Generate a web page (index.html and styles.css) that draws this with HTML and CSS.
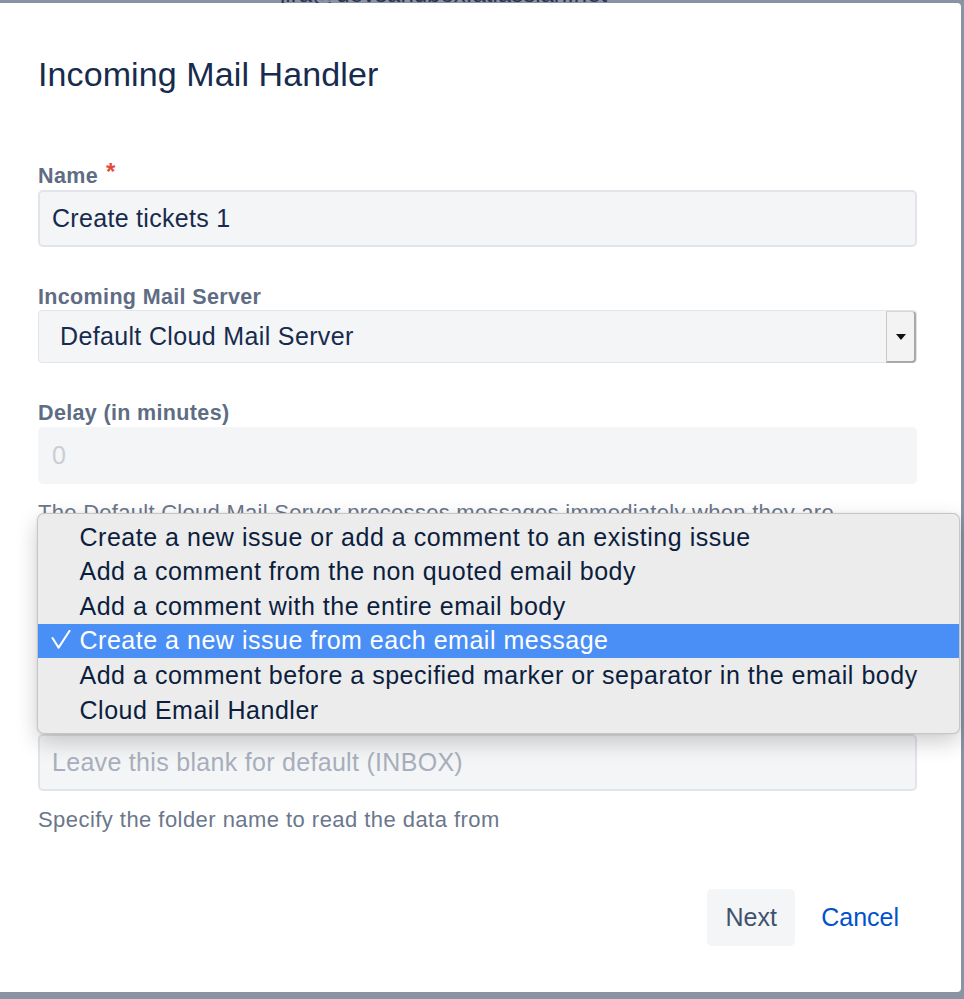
FILE: index.html
```html
<!DOCTYPE html>
<html lang="en">
<head>
<meta charset="utf-8">
<title>Incoming Mail Handler</title>
<link rel="stylesheet" href="styles.css">
</head>
<body>
<div class="page">
  <div class="page-email">jira@devsandbox.atlassian.net</div>
</div>

<div class="modal" role="dialog">
  <h1 class="title">Incoming Mail Handler</h1>

  <div class="field field-first">
    <div class="label">Name<span class="req">*</span></div>
    <div class="input">Create tickets 1</div>
  </div>

  <div class="field">
    <div class="label">Incoming Mail Server</div>
    <div class="select">
      <span class="select-text">Default Cloud Mail Server</span>
      <span class="select-btn"><span class="select-arrow"></span></span>
    </div>
  </div>

  <div class="field">
    <div class="label">Delay (in minutes)</div>
    <div class="input input-disabled">0</div>
    <div class="help help-delay">The Default Cloud Mail Server processes messages immediately when they are<br>received.</div>
  </div>

  <div class="field">
    <div class="label">Handler</div>
    <div class="select">
      <span class="select-text">Create a new issue from each email message</span>
      <span class="select-btn"><span class="select-arrow"></span></span>
    </div>
  </div>

  <div class="field field-folder">
    <div class="label">Folder name</div>
    <div class="input input-placeholder">Leave this blank for default (INBOX)</div>
    <div class="help">Specify the folder name to read the data from</div>
  </div>

  <div class="footer">
    <button class="btn btn-next" type="button">Next</button>
    <button class="btn btn-cancel" type="button">Cancel</button>
  </div>

  <ul class="menu">
    <li class="menu-item">Create a new issue or add a comment to an existing issue</li>
    <li class="menu-item">Add a comment from the non quoted email body</li>
    <li class="menu-item">Add a comment with the entire email body</li>
    <li class="menu-item menu-item-selected"><svg class="check" width="20" height="20" viewBox="0 0 20 20"><polyline points="1.5,8 7.6,17.6 18.6,0.8" fill="none" stroke="#ffffff" stroke-width="2" stroke-linecap="round" stroke-linejoin="round"/></svg>Create a new issue from each email message</li>
    <li class="menu-item">Add a comment before a specified marker or separator in the email body</li>
    <li class="menu-item">Cloud Email Handler</li>
  </ul>
</div>
</body>
</html>
```

FILE: styles.css
```css
html, body {
  margin: 0;
  padding: 0;
}

body {
  position: relative;
  width: 964px;
  height: 999px;
  overflow: hidden;
  background: #8993a4;
  font-family: "Liberation Sans", Arial, sans-serif;
}

.page {
  padding-left: 280px;
}

.page-email {
  margin-top: -20px;
  font-size: 24px;
  line-height: 28px;
  color: #2a3550;
}

.modal {
  position: absolute;
  top: 3px;
  left: 0;
  width: 961px;
  box-sizing: border-box;
  padding: 51px 44px 46px 38px;
  background: #ffffff;
  border-radius: 0 4px 4px 0;
}

.title {
  margin: 0;
  font-size: 34px;
  font-weight: 400;
  line-height: 40px;
  letter-spacing: 0.1px;
  color: #172b4d;
}

.field {
  margin-top: 37px;
}

.field-first {
  margin-top: 69px;
}

.field-folder {
  margin-top: 39px;
}

.label {
  font-size: 21.5px;
  font-weight: 700;
  line-height: 26px;
  letter-spacing: 0.35px;
  color: #5e6c84;
}

.req {
  display: inline-block;
  vertical-align: top;
  margin-left: 8px;
  font-size: 24px;
  line-height: 18px;
  font-weight: 700;
  color: #e5493a;
}

.input {
  box-sizing: border-box;
  height: 57px;
  margin-top: 1px;
  padding: 0 12px;
  display: flex;
  align-items: center;
  border: 2px solid #e2e4e9;
  border-radius: 5px;
  background: #f4f5f7;
  font-size: 25px;
  letter-spacing: 0.3px;
  color: #172b4d;
}

.input-disabled {
  border-color: #f4f5f7;
  color: #c9ced6;
}

.input-placeholder {
  color: #a8afbc;
}

.select {
  box-sizing: border-box;
  height: 53px;
  display: flex;
  border: 1px solid #e2e4e9;
  border-radius: 4px;
  background: #f4f5f7;
}

.select-text {
  flex: 1;
  display: flex;
  align-items: center;
  padding-left: 21px;
  font-size: 25px;
  letter-spacing: 0.35px;
  color: #172b4d;
}

.select-btn {
  box-sizing: border-box;
  width: 30px;
  margin: 0 0 -1px 0;
  display: flex;
  align-items: center;
  justify-content: center;
  border-top: 1px solid #d6d6d6;
  border-left: 1px solid #c9c9c9;
  border-right: 2px solid #a9a9a9;
  border-bottom: 2px solid #a9a9a9;
  border-radius: 0 4px 4px 0;
  background: #f3f3f3;
}

.select-arrow {
  width: 0;
  height: 0;
  border-left: 5.5px solid transparent;
  border-right: 5.5px solid transparent;
  border-top: 6px solid #111111;
}

.help {
  margin-top: 16px;
  font-size: 22px;
  line-height: 26px;
  letter-spacing: 0.45px;
  color: #6b778c;
}

.help-delay {
  letter-spacing: 0.28px;
}

.footer {
  margin-top: 56px;
  display: flex;
  justify-content: flex-end;
  gap: 8px;
}

.btn {
  box-sizing: border-box;
  height: 57px;
  padding: 0 18px;
  border: none;
  border-radius: 5px;
  background: transparent;
  font-family: "Liberation Sans", Arial, sans-serif;
  font-size: 25px;
  cursor: pointer;
}

.btn-next {
  width: 88px;
  background: #f4f5f7;
  color: #42526e;
}

.btn-cancel {
  color: #0052cc;
}

.menu {
  position: absolute;
  top: 510px;
  left: 37px;
  width: 923px;
  box-sizing: border-box;
  margin: 0;
  padding: 5.7px 0;
  list-style: none;
  background: #ececec;
  border: 1px solid rgba(0, 0, 0, 0.16);
  border-radius: 7px;
  box-shadow: 0 8px 22px rgba(0, 0, 0, 0.2), 0 0 3px rgba(0, 0, 0, 0.08);
}

.menu-item {
  position: relative;
  height: 34.67px;
  padding-left: 41.5px;
  display: flex;
  align-items: center;
  font-size: 25px;
  letter-spacing: 0.52px;
  color: #0c1e3e;
  white-space: nowrap;
}

.menu-item-selected {
  background: #4a8ff5;
  color: #ffffff;
}

.check {
  position: absolute;
  left: 12.5px;
  top: 6px;
}
```
